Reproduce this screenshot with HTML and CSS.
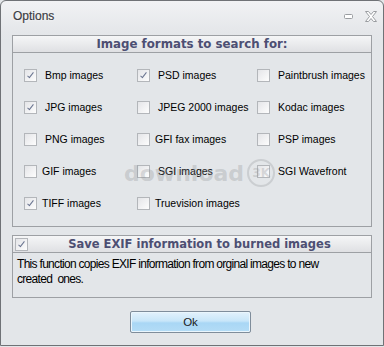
FILE: index.html
```html
<!DOCTYPE html>
<html lang="en">
<head>
  <meta charset="UTF-8">
  <title>Options</title>
  <link rel="stylesheet" href="styles.css">
</head>
<body>
  <div class="window">
    <header class="titlebar">
      <span class="title">Options</span>
      <div class="win-controls">
        <svg class="btn-min" width="9" height="5" viewBox="0 0 9 5"><rect x="0.5" y="0.5" width="8" height="4" rx="1" fill="#fff" stroke="#9a9da1"/></svg>
        <svg class="btn-close" width="12" height="11" viewBox="0 0 12 11"><path d="M0.5 0.5h3l2.5 3 2.5-3h3l-4 5 4 5h-3l-2.5-3-2.5 3h-3l4-5z" fill="#fff" stroke="#9a9da1"/></svg>
      </div>
    </header>

    <section class="group formats">
      <div class="group-head">Image formats to search for:</div>
      <div class="format-grid">
        <label class="opt"><span class="check on"></span>Bmp images</label>
        <label class="opt"><span class="check on"></span>PSD images</label>
        <label class="opt"><span class="check"></span>Paintbrush images</label>

        <label class="opt"><span class="check on"></span>JPG images</label>
        <label class="opt"><span class="check"></span>JPEG 2000 images</label>
        <label class="opt"><span class="check"></span>Kodac images</label>

        <label class="opt"><span class="check"></span>PNG images</label>
        <label class="opt narrow"><span class="check"></span>GFI fax images</label>
        <label class="opt"><span class="check"></span>PSP images</label>

        <label class="opt narrow"><span class="check"></span>GIF images</label>
        <label class="opt"><span class="check"></span>SGI images</label>
        <label class="opt"><span class="check"></span>SGI Wavefront</label>

        <label class="opt narrow"><span class="check on"></span>TIFF images</label>
        <label class="opt narrow"><span class="check"></span>Truevision images</label>
      </div>
    </section>

    <section class="group exif">
      <div class="group-head">
        <span class="check on"></span>
        <span class="head-text">Save EXIF information to burned images</span>
      </div>
      <p class="note">This function copies EXIF information from orginal images to new created&nbsp; ones.</p>
    </section>

    <div class="actions">
      <button class="ok-btn">Ok</button>
    </div>

    <div class="watermark">download<span class="wm-badge">3K</span></div>
  </div>
</body>
</html>
```

FILE: styles.css
```css
html, body {
  margin: 0;
  padding: 0;
  background: #e3e6e9;
}

.window {
  position: relative;
  box-sizing: border-box;
  width: 384px;
  height: 346px;
  border: 1px solid #6f7276;
  border-radius: 6px 6px 0 0;
  background: linear-gradient(#f1f2f4 0, #e5e7ea 30px, #e3e6e9 40px);
  font-family: "Liberation Sans", Arial, sans-serif;
  font-size: 10.5px;
  color: #000;
  padding: 0 11px;
}

.titlebar {
  display: flex;
  align-items: center;
  justify-content: space-between;
  height: 34px;
  padding-bottom: 4px;
  box-sizing: border-box;
}

.title {
  margin-left: 1px;
  font-size: 12px;
  color: #3c3d44;
  -webkit-text-stroke: 0.2px #3c3d44;
  text-shadow: 0 0 3px #fff;
}

.win-controls {
  display: flex;
  align-items: center;
  gap: 12px;
  margin-right: -5px;
}

.btn-min { margin-top: 1px; }

.group {
  border: 1px solid #9da0a4;
  background: #e3e6e9;
}

.group-head {
  display: flex;
  align-items: center;
  justify-content: center;
  height: 16px;
  border-bottom: 1px solid #9da0a4;
  background: linear-gradient(#f5f6f7, #dfe0e3);
  font-family: "DejaVu Sans", Verdana, sans-serif;
  font-weight: bold;
  font-size: 11.8px;
  color: #4d4f73;
}

.format-grid {
  display: grid;
  grid-template-columns: 113px 120px 1fr;
  grid-auto-rows: 32px;
  padding: 6px 0 7px 11px;
}

.opt {
  display: flex;
  align-items: center;
  gap: 8px;
  white-space: nowrap;
}

.opt.narrow { gap: 5px; }

.check {
  position: relative;
  flex: none;
  box-sizing: border-box;
  width: 13px;
  height: 13px;
  border: 1px solid #b3b6ba;
  background: linear-gradient(135deg, #e4e5e8, #fdfdfd);
}

.check.on::after {
  content: "";
  position: absolute;
  left: 4px;
  top: 1px;
  width: 2px;
  height: 6px;
  border-right: 1.5px solid #6a7590;
  border-bottom: 1.5px solid #6a7590;
  transform: rotate(38deg);
}

.exif {
  margin-top: 8px;
  height: 63px;
  box-sizing: border-box;
}

.exif .group-head {
  justify-content: flex-start;
  padding-left: 2px;
}

.head-text {
  flex: 1;
  text-align: center;
  font-size: 11.5px;
}

.note {
  margin: 4px 0 0 4px;
  font-size: 12px;
  line-height: 15px;
  letter-spacing: -0.7px;
  width: 340px;
}

.actions {
  display: flex;
  justify-content: center;
  padding-top: 13px;
  padding-right: 3px;
}

.ok-btn {
  width: 121px;
  height: 22px;
  border: 1px solid #7f8d9b;
  border-radius: 2px;
  box-shadow: inset 0 0 0 1px #eaf6fd;
  background: linear-gradient(#e3f2fc 0, #c8e6f9 45%, #a9d7f5 55%, #b4dcf6 100%);
  font-family: "Liberation Sans", Arial, sans-serif;
  font-size: 11.5px;
  color: #1a1a1a;
  padding: 0;
}

.watermark {
  position: absolute;
  left: 123px;
  top: 158px;
  display: flex;
  align-items: center;
  gap: 3px;
  font-family: "DejaVu Sans", sans-serif;
  font-weight: bold;
  font-size: 22px;
  color: rgba(140, 142, 146, 0.3);
  pointer-events: none;
}

.wm-badge {
  display: inline-flex;
  align-items: center;
  justify-content: center;
  width: 24px;
  height: 24px;
  border-radius: 50%;
  border: 2px solid rgba(140, 142, 146, 0.28);
  font-size: 12px;
}
```
